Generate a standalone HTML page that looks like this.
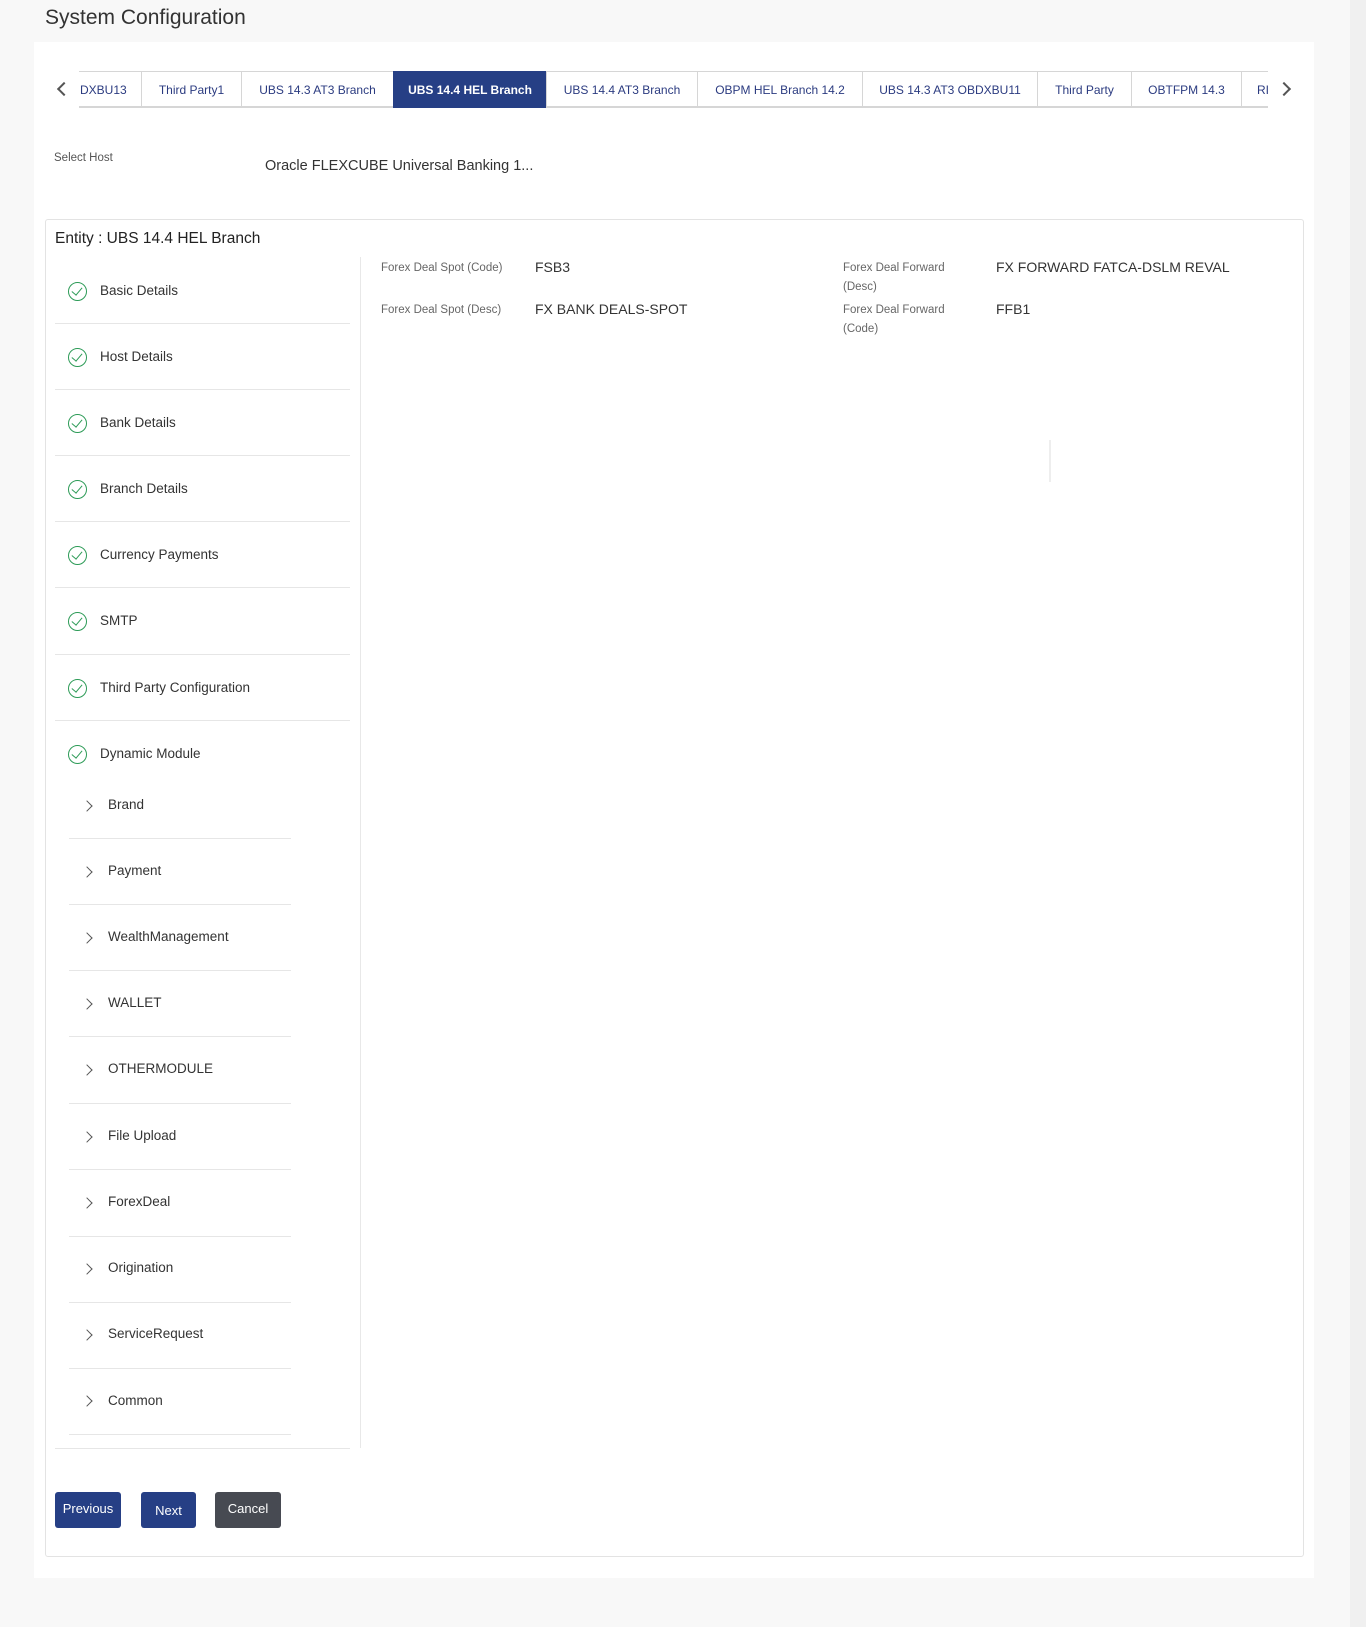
<!DOCTYPE html>
<html><head><meta charset="utf-8"><style>
*{margin:0;padding:0;box-sizing:border-box}
body{width:1366px;height:1627px;background:#f8f8f8;font-family:"Liberation Sans",sans-serif;position:relative;overflow:hidden;color:#333}
.a{position:absolute;white-space:nowrap}
.panel{position:absolute;left:34px;top:42px;width:1280px;height:1536px;background:#fff}
.tab{position:absolute;top:71px;height:37px;border:1px solid #d6d6d6;border-right:none;border-bottom:2px solid #d6d6d6;font-size:12px;color:#2b3b80;text-align:center;line-height:36px;background:#fff}
.tab.on{background:#263f85;color:#fff;border-color:#263f85;font-weight:bold}
.sep{position:absolute;height:1px;background:#e6e6e6}
.nav{position:absolute;left:100px;font-size:13.5px;color:#333}
.chk{position:absolute;left:68px;width:19px;height:19px;border:1.5px solid #2d9b57;border-radius:50%}
.chk:after{content:"";position:absolute;left:5px;top:2px;width:5px;height:9px;border:solid #2d9b57;border-width:0 1.5px 1.5px 0;transform:rotate(40deg)}
.sub{position:absolute;left:108px;font-size:13.5px;color:#333}
.chev{position:absolute;left:83px;width:8px;height:8px;border:solid #555;border-width:1.3px 1.3px 0 0;transform:rotate(45deg)}
.lbl{position:absolute;font-size:11.5px;color:#666;line-height:19px}
.val{position:absolute;font-size:14px;color:#333}
.btn{position:absolute;top:1492px;height:36px;border-radius:3px;color:#fff;font-size:13px;text-align:center;line-height:34px}
</style></head><body>
<div class="a" style="left:45px;top:6px;font-size:21px;color:#333">System Configuration</div>
<div style="position:absolute;left:1350px;top:0;width:16px;height:1627px;background:#f0f0f0"></div>
<div class="panel"></div>
<div class="a" style="left:59px;top:84px;width:10px;height:10px;border:solid #555;border-width:0 0 2.5px 2.5px;transform:rotate(45deg)"></div>
<div class="a" style="left:1279px;top:84px;width:10px;height:10px;border:solid #555;border-width:2.5px 2.5px 0 0;transform:rotate(45deg)"></div>
<div class="tab" style="left:79px;width:62px;border-left:none;text-align:left;padding-left:1px">DXBU13</div>
<div class="tab" style="left:141px;width:100px">Third Party1</div>
<div class="tab" style="left:241px;width:152px">UBS 14.3 AT3 Branch</div>
<div class="tab on" style="left:393px;width:153px">UBS 14.4 HEL Branch</div>
<div class="tab" style="left:546px;width:151px">UBS 14.4 AT3 Branch</div>
<div class="tab" style="left:697px;width:165px">OBPM HEL Branch 14.2</div>
<div class="tab" style="left:862px;width:175px">UBS 14.3 AT3 OBDXBU11</div>
<div class="tab" style="left:1037px;width:94px">Third Party</div>
<div class="tab" style="left:1131px;width:110px">OBTFPM 14.3</div>
<div class="tab" style="left:1241px;width:27px;text-align:left;padding-left:15px;overflow:hidden">RI</div>
<div class="a" style="left:54px;top:152px;font-size:11.5px;color:#555">Select Host</div>
<div class="a" style="left:265px;top:158px;font-size:14.5px;color:#333">Oracle FLEXCUBE Universal Banking 1...</div>
<div style="position:absolute;left:45px;top:219px;width:1259px;height:1338px;border:1px solid #e3e3e3;border-radius:3px"></div>
<div class="a" style="left:55px;top:230px;font-size:15.5px;color:#222">Entity : UBS 14.4 HEL Branch</div>
<div style="position:absolute;left:360px;top:257px;width:1px;height:1191px;background:#e8e8e8"></div>

<div class="chk" style="top:282px"></div><div class="nav" style="top:283px">Basic Details</div><div class="sep" style="left:55px;top:323px;width:295px"></div>
<div class="chk" style="top:348px"></div><div class="nav" style="top:349px">Host Details</div><div class="sep" style="left:55px;top:389px;width:295px"></div>
<div class="chk" style="top:414px"></div><div class="nav" style="top:415px">Bank Details</div><div class="sep" style="left:55px;top:455px;width:295px"></div>
<div class="chk" style="top:480px"></div><div class="nav" style="top:481px">Branch Details</div><div class="sep" style="left:55px;top:521px;width:295px"></div>
<div class="chk" style="top:546px"></div><div class="nav" style="top:547px">Currency Payments</div><div class="sep" style="left:55px;top:587px;width:295px"></div>
<div class="chk" style="top:612px"></div><div class="nav" style="top:613px">SMTP</div><div class="sep" style="left:55px;top:654px;width:295px"></div>
<div class="chk" style="top:679px"></div><div class="nav" style="top:680px">Third Party Configuration</div><div class="sep" style="left:55px;top:720px;width:295px"></div>
<div class="chk" style="top:745px"></div><div class="nav" style="top:746px">Dynamic Module</div>

<div class="chev" style="top:802px"></div><div class="sub" style="top:797px">Brand</div><div class="sep" style="left:69px;top:838px;width:222px"></div>
<div class="chev" style="top:868px"></div><div class="sub" style="top:863px">Payment</div><div class="sep" style="left:69px;top:904px;width:222px"></div>
<div class="chev" style="top:934px"></div><div class="sub" style="top:929px">WealthManagement</div><div class="sep" style="left:69px;top:970px;width:222px"></div>
<div class="chev" style="top:1000px"></div><div class="sub" style="top:995px">WALLET</div><div class="sep" style="left:69px;top:1036px;width:222px"></div>
<div class="chev" style="top:1066px"></div><div class="sub" style="top:1061px">OTHERMODULE</div><div class="sep" style="left:69px;top:1103px;width:222px"></div>
<div class="chev" style="top:1133px"></div><div class="sub" style="top:1128px">File Upload</div><div class="sep" style="left:69px;top:1169px;width:222px"></div>
<div class="chev" style="top:1199px"></div><div class="sub" style="top:1194px">ForexDeal</div><div class="sep" style="left:69px;top:1236px;width:222px"></div>
<div class="chev" style="top:1265px"></div><div class="sub" style="top:1260px">Origination</div><div class="sep" style="left:69px;top:1302px;width:222px"></div>
<div class="chev" style="top:1331px"></div><div class="sub" style="top:1326px">ServiceRequest</div><div class="sep" style="left:69px;top:1368px;width:222px"></div>
<div class="chev" style="top:1397px"></div><div class="sub" style="top:1393px">Common</div><div class="sep" style="left:69px;top:1434px;width:222px"></div>
<div class="sep" style="left:55px;top:1448px;width:295px"></div>

<div class="lbl" style="left:381px;top:259px">Forex Deal Spot (Code)</div>
<div class="val" style="left:535px;top:259px">FSB3</div>
<div class="lbl" style="left:381px;top:301px">Forex Deal Spot (Desc)</div>
<div class="val" style="left:535px;top:301px">FX BANK DEALS-SPOT</div>
<div class="lbl" style="left:843px;top:259px;width:120px;white-space:normal">Forex Deal Forward (Desc)</div>
<div class="val" style="left:996px;top:259px">FX FORWARD FATCA-DSLM REVAL</div>
<div class="lbl" style="left:843px;top:301px;width:120px;white-space:normal">Forex Deal Forward (Code)</div>
<div class="val" style="left:996px;top:301px">FFB1</div>
<div style="position:absolute;left:1049px;top:440px;width:2px;height:42px;background:#eee"></div>

<div class="btn" style="left:55px;width:66px;background:#263f85">Previous</div>
<div class="btn" style="left:141px;width:55px;background:#263f85;line-height:38px">Next</div>
<div class="btn" style="left:215px;width:66px;background:#474a52">Cancel</div>
</body></html>
